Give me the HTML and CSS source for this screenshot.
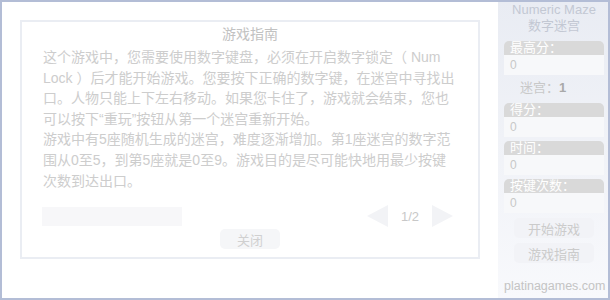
FILE: index.html
```html
<!DOCTYPE html>
<html lang="zh-CN">
<head>
    <meta charset="UTF-8">
    <title>Numeric Maze 数字迷宫</title>
    <link rel="stylesheet" href="styles.css">
</head>
<body>

    <div class="game">

        <div class="stage">
            <div class="guide">
                <div class="guide-title">游戏指南</div>
                <div class="guide-text">
                    <p>这个游戏中，您需要使用数字键盘，必须在开启数字锁定（ Num Lock ）后才能开始游戏。您要按下正确的数字键，在迷宫中寻找出口。人物只能上下左右移动。如果您卡住了，游戏就会结束，您也可以按下“重玩”按钮从第一个迷宫重新开始。</p>
                    <p>游戏中有5座随机生成的迷宫，难度逐渐增加。第1座迷宫的数字范围从0至5，到第5座就是0至9。游戏目的是尽可能快地用最少按键次数到达出口。</p>
                </div>
                <div class="guide-footer">
                    <div class="guide-bar"></div>
                    <div class="pager">
                        <span class="arrow arrow-prev"></span>
                        <span class="page-num">1/2</span>
                        <span class="arrow arrow-next"></span>
                    </div>
                </div>
                <button class="close-btn">关闭</button>
            </div>
        </div>

        <aside class="side">
            <div class="side-title">Numeric Maze<br>数字迷宫</div>

            <div class="stat">
                <div class="stat-label">最高分：</div>
                <div class="stat-value">0</div>
            </div>

            <div class="level">迷宫：<b>1</b></div>

            <div class="stat">
                <div class="stat-label">得分：</div>
                <div class="stat-value">0</div>
            </div>

            <div class="stat">
                <div class="stat-label">时间：</div>
                <div class="stat-value">0</div>
            </div>

            <div class="stat">
                <div class="stat-label">按键次数：</div>
                <div class="stat-value">0</div>
            </div>

            <button class="side-btn">开始游戏</button>
            <button class="side-btn">游戏指南</button>

            <div class="site">platinagames.com</div>
        </aside>

    </div>

</body>
</html>
```

FILE: styles.css
```css
body, html {
    margin: 0;
    padding: 0;
    font-family: "Liberation Sans", "Noto Sans CJK SC", sans-serif;
}

.game {
    display: flex;
    width: 610px;
    height: 300px;
    box-sizing: border-box;
    border: 2px solid #b3bdd6;
    background-color: white;
}

.stage {
    width: 496px;
    padding: 18px 0 0 18px;
    box-sizing: border-box;
}

.guide {
    display: flex;
    flex-direction: column;
    width: 460px;
    height: 239px;
    box-sizing: border-box;
    border: 2px solid #eaedf3;
}

.guide-title {
    margin-top: 2px;
    text-align: center;
    font-size: 14px;
    line-height: 20px;
    color: #c2c2c2;
}

.guide-text {
    margin-top: 3px;
    padding: 0 21px;
    font-size: 14px;
    line-height: 20.6px;
    color: #cdcdcd;
}

.guide-text p {
    margin: 0;
}

.guide-footer {
    display: flex;
    align-items: center;
    justify-content: space-between;
    height: 22px;
    margin-top: 14px;
    padding: 0 25px 0 20px;
}

.guide-bar {
    width: 140px;
    height: 19px;
    background-color: #f7f7f9;
}

.pager {
    display: flex;
    align-items: center;
}

.arrow {
    width: 0;
    height: 0;
    border-top: 11px solid transparent;
    border-bottom: 11px solid transparent;
}

.arrow-prev {
    border-right: 21px solid #f2f3f6;
}

.arrow-next {
    border-left: 21px solid #f2f3f6;
}

.page-num {
    margin: 0 13px;
    font-size: 13px;
    color: #c8c8c8;
}

.close-btn {
    align-self: center;
    width: 60px;
    height: 20px;
    margin-top: 2px;
    padding: 0;
    border: none;
    border-radius: 5px;
    background-color: #f5f6f8;
    color: #d0d0d0;
    font-family: inherit;
    font-size: 13px;
}

.side {
    display: flex;
    flex-direction: column;
    width: 110px;
    padding: 0 4px 0 6px;
    box-sizing: border-box;
    background: linear-gradient(#e9ecf3, #f8f9fc);
}

.side-title {
    text-align: center;
    font-size: 13px;
    line-height: 16px;
    color: #c3c8d3;
    margin-bottom: 3px;
}

.stat {
    margin-top: 4px;
}

.stat-label {
    height: 14px;
    padding-left: 6px;
    border-radius: 5px 5px 0 0;
    background-color: #d9d9d9;
    color: white;
    font-size: 13px;
    line-height: 14px;
}

.stat-value {
    height: 20px;
    padding-left: 6px;
    background-color: #f7f8fa;
    color: #c8c8c8;
    font-size: 12px;
    line-height: 20px;
}

.level {
    height: 22px;
    padding: 2px 0 0 16px;
    font-size: 13px;
    line-height: 22px;
    color: #c8c8c8;
}

.level b {
    color: #a9a9a9;
}

.side-btn {
    align-self: center;
    width: 80px;
    height: 20px;
    margin-top: 5px;
    padding: 0;
    border: none;
    border-radius: 5px;
    background-color: #f2f3f7;
    color: #cbcbcb;
    font-family: inherit;
    font-size: 13px;
}

.site {
    margin-top: auto;
    margin-bottom: 5px;
    text-align: center;
    font-size: 12.5px;
    color: #c4c4c4;
}
```
